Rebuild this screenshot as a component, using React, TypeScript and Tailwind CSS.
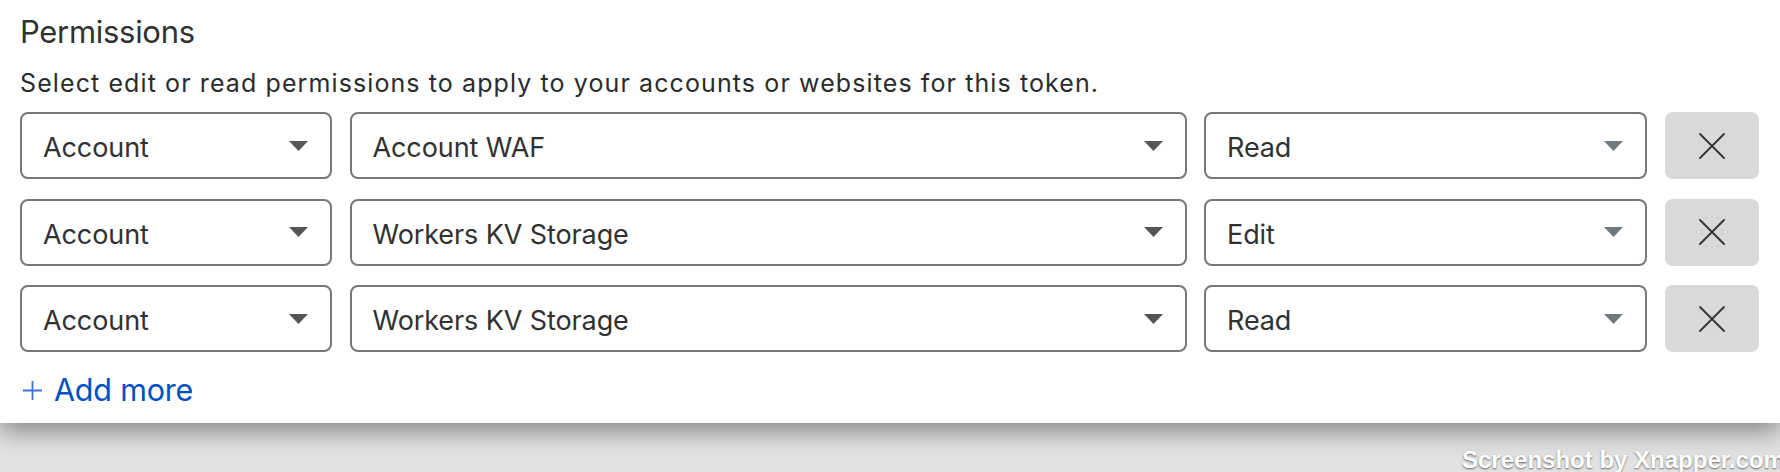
type Row = { scope: string; perm: string; level: string };

const rows: Row[] = [
  { scope: "Account", perm: "Account WAF", level: "Read" },
  { scope: "Account", perm: "Workers KV Storage", level: "Edit" },
  { scope: "Account", perm: "Workers KV Storage", level: "Read" },
];

function Caret({ light }: { light?: boolean }) {
  return (
    <svg width="19" height="10" viewBox="0 0 19 10" className="shrink-0">
      <path d="M0 0 H19 L9.5 10 Z" fill={light ? "#72777c" : "#555555"} />
    </svg>
  );
}

function SelectBox({ value, width, light }: { value: string; width: string; light?: boolean }) {
  return (
    <div
      className={`${width} h-[67px] flex items-center justify-between rounded-[8px] border-2 border-[#777777] bg-white pl-[21px] pr-[22px]`}
    >
      <span className="pt-[5px] text-[27px] leading-[32px] text-[#313131] tracking-[-0.1px]">{value}</span>
      <Caret light={light} />
    </div>
  );
}

export default function App() {
  return (
    <div className="relative w-[1780px] h-[472px] overflow-hidden bg-[#e2e2e2] font-['Inter','Noto_Sans',sans-serif]">
      <div className="bg-white px-5 pt-[14px] pb-[15px] shadow-[0_8px_24px_rgba(0,0,0,0.42)]">
        <h2 className="text-[31px] leading-[36px] text-[#313131] tracking-[-0.3px]">Permissions</h2>
        <p className="mt-[17px] text-[25px] leading-[32px] text-[#2b2b2b] tracking-[1.1px]">
          Select edit or read permissions to apply to your accounts or websites for this token.
        </p>
        <div className="mt-[13px] flex flex-col gap-[19.5px]">
          {rows.map((r, i) => (
            <div key={i} className="flex gap-[17.5px]">
              <SelectBox value={r.scope} width="w-[312px]" />
              <SelectBox value={r.perm} width="w-[837px]" />
              <SelectBox value={r.level} width="w-[443px]" light />
              <button className="w-[94px] h-[67px] rounded-[8px] bg-[#d9d9d9] flex items-center justify-center">
                <svg width="26" height="26" viewBox="0 0 26 26">
                  <path d="M1 1 L25 25 M25 1 L1 25" stroke="#333333" strokeWidth="1.8" strokeLinecap="round" />
                </svg>
              </button>
            </div>
          ))}
        </div>
        <button className="mt-[20px] flex items-center gap-[12px] pl-[3px] text-[#0051c3]">
          <svg width="19" height="19" viewBox="0 0 19 19" className="shrink-0">
            <path d="M9.5 0 V19 M0 9.5 H19" stroke="#3a72d8" strokeWidth="1.8" />
          </svg>
          <span className="text-[30.5px] leading-[36px] tracking-[-0.2px]">Add more</span>
        </button>
      </div>
      <div className="absolute left-[1462px] top-[446px] whitespace-nowrap font-['Liberation_Sans',sans-serif] font-bold text-[24px] leading-[28px] text-white [text-shadow:0_1px_2px_rgba(0,0,0,0.55)]">
        Screenshot by Xnapper.com
      </div>
    </div>
  );
}
